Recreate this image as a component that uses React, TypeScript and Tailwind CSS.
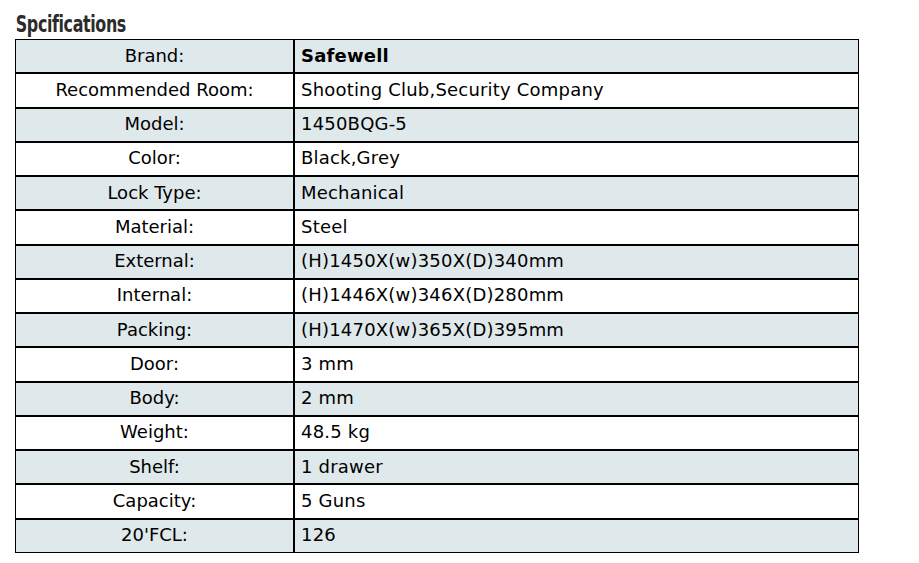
const rows: [string, string][] = [
  ['Brand:', 'Safewell'],
  ['Recommended Room:', 'Shooting Club,Security Company'],
  ['Model:', '1450BQG-5'],
  ['Color:', 'Black,Grey'],
  ['Lock Type:', 'Mechanical'],
  ['Material:', 'Steel'],
  ['External:', '(H)1450X(w)350X(D)340mm'],
  ['Internal:', '(H)1446X(w)346X(D)280mm'],
  ['Packing:', '(H)1470X(w)365X(D)395mm'],
  ['Door:', '3 mm'],
  ['Body:', '2 mm'],
  ['Weight:', '48.5 kg'],
  ['Shelf:', '1 drawer'],
  ['Capacity:', '5 Guns'],
  ["20'FCL:", '126'],
]

export default function App() {
  return (
    <div className="w-[919px] h-[563px] bg-white pl-[15px] pt-[11px]">
      <h2 className="pl-[1px] h-[28px] text-[#2b2b2b] text-[23px] leading-[26px] font-bold tracking-[-0.5px] font-['Liberation_Sans_Narrow','DejaVu_Sans_Condensed',sans-serif] origin-left scale-x-[0.77]">
        Spcifications
      </h2>
      <div className="w-[844px] border border-black font-['DejaVu_Sans','Verdana',sans-serif] text-[18px] text-black">
        {rows.map(([label, value], i) => (
          <div
            key={label}
            className={`flex items-center ${i > 0 ? 'h-[34.25px] border-t-2 border-black' : 'h-[32.25px]'} ${i % 2 === 0 ? 'bg-[#dfe8ea]' : 'bg-white'}`}
          >
            <div className="w-[279px] h-full pb-[2px] flex items-center justify-center border-r-2 border-black">{label}</div>
            <div className={`flex-1 pl-[6px] pb-[2px] tracking-[0.2px] ${i === 0 ? 'font-bold' : ''}`}>{value}</div>
          </div>
        ))}
      </div>
    </div>
  )
}
